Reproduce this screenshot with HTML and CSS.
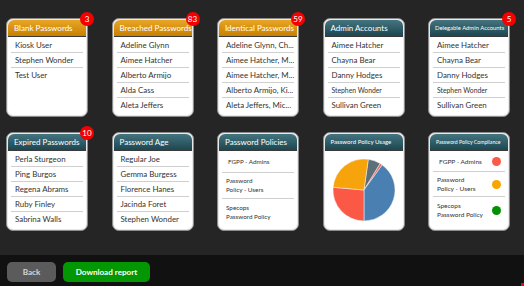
FILE: index.html
```html
<!DOCTYPE html>
<html lang="en">
<head>
<meta charset="utf-8">
<title>Password Audit</title>
<link rel="stylesheet" href="styles.css">
</head>
<body>
<main class="board">
  <section class="card">
    <header class="card-head orange">Blank Passwords</header>
    <span class="badge">3</span>
    <ul class="list">
      <li>Kiosk User</li>
      <li>Stephen Wonder</li>
      <li>Test User</li>
    </ul>
  </section>
  <section class="card">
    <header class="card-head orange">Breached Passwords</header>
    <span class="badge">83</span>
    <ul class="list">
      <li>Adeline Glynn</li>
      <li>Aimee Hatcher</li>
      <li>Alberto Armijo</li>
      <li>Alda Cass</li>
      <li>Aleta Jeffers</li>
    </ul>
  </section>
  <section class="card">
    <header class="card-head orange">Identical Passwords</header>
    <span class="badge">59</span>
    <ul class="list">
      <li>Adeline Glynn, Ch...</li>
      <li>Aimee Hatcher, M...</li>
      <li>Aimee Hatcher, M...</li>
      <li>Alberto Armijo, Ki...</li>
      <li>Aleta Jeffers, Mic...</li>
    </ul>
  </section>
  <section class="card">
    <header class="card-head teal">Admin Accounts</header>
    <ul class="list">
      <li>Aimee Hatcher</li>
      <li>Chayna Bear</li>
      <li>Danny Hodges</li>
      <li class="small">Stephen Wonder</li>
      <li>Sullivan Green</li>
    </ul>
  </section>
  <section class="card">
    <header class="card-head teal tiny">Delegable Admin Accounts</header>
    <span class="badge">5</span>
    <ul class="list">
      <li>Aimee Hatcher</li>
      <li>Chayna Bear</li>
      <li>Danny Hodges</li>
      <li class="small">Stephen Wonder</li>
      <li>Sullivan Green</li>
    </ul>
  </section>

  <section class="card">
    <header class="card-head teal">Expired Passwords</header>
    <span class="badge">10</span>
    <ul class="list">
      <li>Perla Sturgeon</li>
      <li>Ping Burgos</li>
      <li>Regena Abrams</li>
      <li>Ruby Finley</li>
      <li>Sabrina Walls</li>
    </ul>
  </section>
  <section class="card">
    <header class="card-head teal">Password Age</header>
    <ul class="list">
      <li>Regular Joe</li>
      <li>Gemma Burgess</li>
      <li>Florence Hanes</li>
      <li>Jacinda Foret</li>
      <li>Stephen Wonder</li>
    </ul>
  </section>
  <section class="card">
    <header class="card-head teal">Password Policies</header>
    <ul class="policies">
      <li class="single">FGPP - Admins</li>
      <li>Password<br>Policy - Users</li>
      <li>Specops<br>Password Policy</li>
    </ul>
  </section>
  <section class="card">
    <header class="card-head teal small-head">Password Policy Usage</header>
    <div class="pie-wrap">
      <svg class="pie" width="64" height="64" viewBox="-32 -32 64 64">
        <path d="M0 0 L4.31 -30.70 A31 31 0 0 1 16.20 -26.43 Z" fill="#5d6f78"/>
        <path d="M0 0 L16.20 -26.43 A31 31 0 0 1 18.22 -25.08 Z" fill="#e26b6b"/>
        <path d="M0 0 L18.22 -25.08 A31 31 0 0 1 0 31 Z" fill="#4a7fb1"/>
        <path d="M0 0 L0 31 A31 31 0 0 1 -30.88 -2.70 Z" fill="#fb5946"/>
        <path d="M0 0 L-30.88 -2.70 A31 31 0 0 1 4.31 -30.70 Z" fill="#f7a30b"/>
      </svg>
    </div>
  </section>
  <section class="card">
    <header class="card-head teal micro">Password Policy Compliance</header>
    <ul class="compliance">
      <li class="single"><span>FGPP - Admins</span><i class="dot red"></i></li>
      <li><span>Password<br>Policy - Users</span><i class="dot amber"></i></li>
      <li><span>Specops<br>Password Policy</span><i class="dot green"></i></li>
    </ul>
  </section>
</main>
<footer class="bar">
  <button class="btn back">Back</button>
  <button class="btn download">Download report</button>
</footer>
<span class="corner-mark"></span>
</body>
</html>
```

FILE: styles.css
```css
* { box-sizing: border-box; }

html, body {
  margin: 0;
  padding: 0;
}

body {
  width: 524px;
  height: 286px;
  overflow: hidden;
  background: #252525;
  font-family: Lato, "Open Sans", sans-serif;
  color: #333;
}

.board {
  height: 255px;
  padding: 18px 0 0 6px;
  display: grid;
  grid-template-columns: repeat(5, 82px);
  grid-template-rows: 99px 99px;
  column-gap: 23.5px;
  row-gap: 15px;
}

.card {
  position: relative;
  background: #fff;
  border: 1px solid #8c8c8c;
  border-radius: 7px;
  box-shadow: inset 0 0 0 1px #e9e9e9;
  padding: 1px;
}

.card-head {
  height: 17px;
  line-height: 16px;
  padding-left: 6px;
  color: #fff;
  font-size: 8px;
  white-space: nowrap;
  border-radius: 6px 6px 0 0;
  border-bottom: 1px solid #3a3a3a;
}

.card-head.orange {
  background: linear-gradient(#e7a526, #c98000);
}

.card-head.teal {
  background: linear-gradient(#44747f, #1d4751);
}

.card-head.tiny {
  font-size: 5.9px;
  padding-left: 5px;
}

.card-head.small-head {
  font-size: 6.1px;
  padding-left: 6px;
}

.card-head.micro {
  font-size: 5.2px;
  padding-left: 6px;
}

.badge {
  position: absolute;
  top: -7px;
  right: -7px;
  width: 14px;
  height: 14px;
  border-radius: 50%;
  background: #f40000;
  color: #fff;
  font-size: 8px;
  line-height: 14px;
  text-align: center;
}

.list {
  list-style: none;
  margin: 0;
  padding: 0 3px;
}

.list li {
  height: 15px;
  line-height: 15px;
  padding-left: 4px;
  font-size: 7.9px;
  color: #333;
  white-space: nowrap;
  overflow: hidden;
  border-bottom: 1.5px solid #cfcfcf;
}

.list li:first-child {
  height: 16px;
  line-height: 17px;
}

.list li:last-child {
  border-bottom: none;
}

.list li.small {
  font-size: 6.8px;
}

.policies {
  list-style: none;
  margin: 0;
  padding: 0 3px;
}

.policies li {
  font-size: 6.3px;
  line-height: 9.5px;
  color: #333;
  padding: 3px 0 3px 4px;
  border-bottom: 1.5px solid #cfcfcf;
}

.policies li.single {
  padding: 6px 0 5px 6px;
}

.policies li:last-child {
  border-bottom: none;
  padding-top: 4px;
}

.pie-wrap {
  display: flex;
  justify-content: center;
  padding-top: 7px;
}

.pie path {
  stroke: #f4f4f4;
  stroke-width: 0.5;
}

.compliance {
  list-style: none;
  margin: 0;
  padding: 0 3px;
}

.compliance li {
  display: flex;
  align-items: center;
  justify-content: space-between;
  font-size: 6.5px;
  line-height: 9px;
  color: #333;
  padding: 3px 4px 3px 4px;
  border-bottom: 1.5px solid #cfcfcf;
}

.compliance li.single {
  padding: 6px 4px 5px 6px;
}

.compliance li:last-child {
  border-bottom: none;
  padding-top: 4px;
}

.dot {
  width: 9px;
  height: 9px;
  border-radius: 50%;
  flex: none;
}

.dot.red { background: #fb5a48; }
.dot.amber { background: #f9a501; }
.dot.green { background: #029102; }

.bar {
  height: 31px;
  background: #111;
  display: flex;
  align-items: flex-start;
  gap: 7px;
  padding: 7px 0 0 7px;
}

.btn {
  height: 20px;
  border: none;
  border-radius: 5px;
  font-family: inherit;
  font-size: 8.1px;
  font-weight: 700;
  padding: 0;
  cursor: pointer;
}

.btn.back {
  width: 49px;
  background: #5b5b5b;
  color: #d8d8d8;
}

.btn.download {
  width: 87px;
  background: #049704;
  color: #fff;
}

.corner-mark {
  position: fixed;
  right: 0;
  bottom: 0;
  width: 3px;
  height: 3px;
  background: #f00;
}
```
